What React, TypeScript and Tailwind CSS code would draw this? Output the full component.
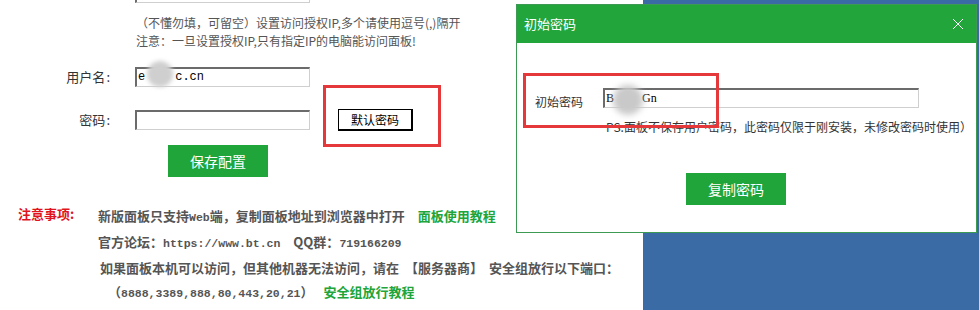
import type { ReactNode } from 'react';

const cjk = "font-['SimSun','Noto_Sans_CJK_SC',sans-serif]";
const mono = "font-['Liberation_Mono',monospace] text-[11.5px]";

function Field({ label, children, className = '' }: { label: string; children: ReactNode; className?: string }) {
  return (
    <div className={`flex items-center ${className}`}>
      <span className="w-[110px] text-right text-[13px] text-[#333]">
        {label}
        <span className="ml-[1px]">:</span>
      </span>
      {children}
    </div>
  );
}

function ClassicInput({ children, className = '' }: { children?: ReactNode; className?: string }) {
  return (
    <div
      className={`relative h-[20px] bg-white border-t-2 border-l-2 border-t-[#6b6b6b] border-l-[#6b6b6b] border-r border-b border-r-[#cfcfcf] border-b-[#cfcfcf] font-['Liberation_Mono',monospace] text-[12px] leading-[17px] text-black pl-[1px] ${className}`}
    >
      {children}
    </div>
  );
}

export default function App() {
  return (
    <div className={`relative flex w-[979px] h-[310px] overflow-hidden bg-white ${cjk}`}>
      {/* Left: panel settings form */}
      <div className="w-[643px] shrink-0">
        <Field label="授权IP" className="mt-[-17px] h-[20px]">
          <ClassicInput className="ml-[25px] w-[175px]" />
        </Field>

        <div className="ml-[136px] mt-[11px] text-[12px] leading-[18px] text-[#555]">
          <p>（不懂勿填，可留空）设置访问授权IP,多个请使用逗号(,)隔开</p>
          <p>注意：一旦设置授权IP,只有指定IP的电脑能访问面板!</p>
        </div>

        <Field label="用户名" className="mt-[17px] h-[20px]">
          <ClassicInput className="ml-[25px] w-[175px]">
            <span>e</span>
            <span className="ml-[30px]">c.cn</span>
            <span className="absolute left-[10px] top-[-8px] w-[26px] h-[26px] rounded-full bg-[#cfcfcf] blur-[2px]" />
          </ClassicInput>
        </Field>

        <Field label="密码" className="mt-[22px] h-[22px]">
          <ClassicInput className="ml-[25px] w-[175px]" />
          <button className="ml-[28px] w-[75px] h-[22px] bg-white border border-black border-r-2 border-b-2 text-[12px] text-black leading-none">
            默认密码
          </button>
        </Field>

        <button className="ml-[168px] mt-[14px] w-[100px] h-[32px] bg-[#20a53a] text-white text-[14px]">
          保存配置
        </button>

        <div className="mt-[27px] flex text-[13px] font-bold leading-[24px] whitespace-nowrap">
          <span className="w-[98px] pl-[18px] text-[#e0141c] leading-[20px]">注意事项:</span>
          <div className="text-[#555]">
            <p>
              新版面板只支持<span className={mono}>Web</span>端，复制面板地址到浏览器中打开
              <span className="ml-[13px] text-[#20a53a]">面板使用教程</span>
            </p>
            <p>
              官方论坛：<span className={mono}>https://www.bt.cn</span>
              <span className="ml-[13px]">QQ群：</span>
              <span className={mono}>719166209</span>
            </p>
            <p className="ml-[2px]">
              如果面板本机可以访问，但其他机器无法访问，请在
              <span className="ml-[6px]">【服务器商】</span>
              <span className="ml-[6px]">安全组放行以下端口：</span>
            </p>
            <p className="ml-[10px]">
              （<span className={mono}>8888,3389,888,80,443,20,21</span>）
              <span className="ml-[10px] text-[#20a53a]">安全组放行教程</span>
            </p>
          </div>
        </div>
      </div>

      {/* Right: window behind the dialog */}
      <div className="flex-1 bg-[#3a6ba4]" />

      {/* Dialog */}
      <div className="absolute left-[516px] top-[4px] w-[461px] h-[229px] bg-white border border-[#3c9a52]">
        <div className="flex items-center justify-between h-[38px] bg-[#22a53b] pl-[7px] pr-[12px] text-white text-[13px]">
          <span>初始密码</span>
          <svg width="12" height="12" viewBox="0 0 12 12" className="mb-[1px]">
            <path d="M1 1L11 11M11 1L1 11" stroke="white" strokeWidth="1" fill="none" />
          </svg>
        </div>
        <div className="flex items-start mt-[45px]">
          <span className="ml-[18px] w-[68px] pt-[5px] text-[12px] leading-[18px] text-[#333]">初始密码</span>
          <ClassicInput className="w-[316px] h-[20px]">
            <span className="font-['Liberation_Serif',serif]">B</span>
            <span className="ml-[28px] font-['Liberation_Serif',serif]">Gn</span>
            <span className="absolute left-[8px] top-[-5px] w-[30px] h-[30px] rounded-full bg-[#c9c9c9] blur-[3px]" />
          </ClassicInput>
        </div>
        <p className="ml-[89px] mt-[7px] text-[12px] leading-[18px] text-[#333] whitespace-nowrap">
          PS:面板不保存用户密码，此密码仅限于刚安装，未修改密码时使用）
        </p>
        <button className="ml-[169px] mt-[37px] w-[100px] h-[32px] bg-[#20a53a] text-white text-[14px]">
          复制密码
        </button>
      </div>

      {/* Red highlight annotations */}
      <div className="absolute left-[323px] top-[85px] w-[118px] h-[62px] border-[3px] border-[#e5383b]" />
      <div className="absolute left-[523px] top-[73px] w-[196px] h-[55px] border-[3px] border-[#e5383b]" />
    </div>
  );
}
